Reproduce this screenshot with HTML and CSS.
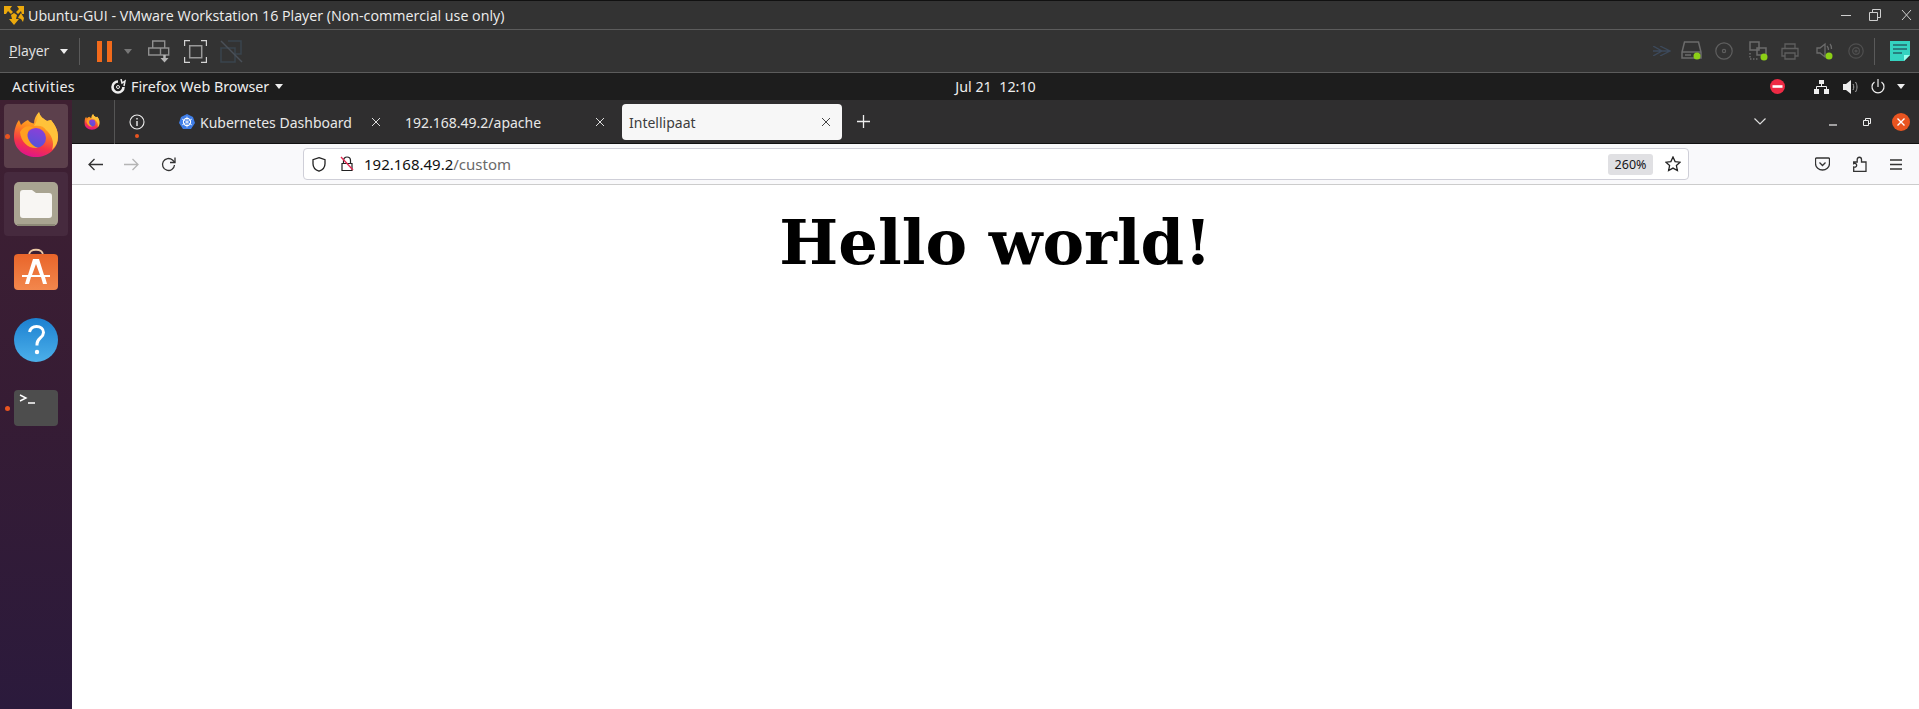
FILE: index.html
```html
<!DOCTYPE html>
<html lang="en">
<head>
<meta charset="utf-8">
<title>Ubuntu-GUI - VMware Workstation 16 Player</title>
<link rel="stylesheet" href="styles.css">
</head>
<body>
<header class="vm-title">
  <svg class="vm-logo" width="20" height="19" viewBox="0 0 20 19"><path fill="#eba90d" d="M0 0h8L6 3l3 3-1 1-1 1-3-3-2 3H0zM20 0v8h-2l-1-3-3 3-2-2 3-3-2-3zM7 9l3-2 3 2-1 4h3l-5 6-5-6h3zM17 7l3 5-1 4-2-3-3-1 1-2z"/></svg>
  <span class="vm-title-text">Ubuntu-GUI - VMware Workstation 16 Player (Non-commercial use only)</span>
  <span class="spacer"></span>
  <svg class="wc wc-min" width="10" height="12" viewBox="0 0 10 12"><path d="M0 6.500h10" stroke="#cfcfcf" fill="none"/></svg>
  <svg class="wc wc-max" width="12" height="12" viewBox="0 0 12 12"><path d="M.5 3.500h8v8h-8zM3.500 3.500v-3h8v8h-3" stroke="#cfcfcf" fill="none"/></svg>
  <svg class="wc wc-close" width="11" height="12" viewBox="0 0 11 12"><path d="M1 1l9 10M10 1L1 11" stroke="#cfcfcf" fill="none"/></svg>
</header>

<section class="vm-toolbar">
  <span class="player-menu"><u>P</u>layer</span>
  <i class="caret caret-light caret-player"></i>
  <i class="vrule vrule-left"></i>
  <svg class="pause" width="16" height="21" viewBox="0 0 16 21"><path fill="#f26a1b" d="M0 0h5v21H0zM10 0h5v21h-5z"/></svg>
  <i class="caret caret-dim caret-pause"></i>
  <svg class="tb-send" width="22" height="23" viewBox="0 0 22 23" fill="none" stroke="#8f8f8f" stroke-width="1.400"><path d="M4.700 1h12v7h-12zM.7 8h20v7H.7zM12.500 8v7"/><path d="M16.500 15v4" stroke="#b5b5b5" stroke-width="2.500"/><path d="M12.500 18h8l-4 4.500z" fill="#b5b5b5" stroke="none"/></svg>
  <svg class="tb-full" width="23" height="23" viewBox="0 0 23 23" fill="none" stroke="#d4d4d4" stroke-width="1.200"><path d="M.6 6V.6H6M17 .6h5.400V6M22.400 17v5.400H17M6 22.400H.6V17"/><path d="M5.700 5.700h12v12h-12z" stroke="#999" stroke-width="1.500"/></svg>
  <svg class="tb-unity" width="23" height="23" viewBox="0 0 23 23" fill="none" stroke="#3a444d" stroke-width="1.500"><path d="M8 1h13v13h-6M1 8h14v14H1z"/><path d="M1 1l21 21" stroke="#4a5058"/></svg>
  <span class="spacer"></span>
  <svg class="st st-arrows" width="18" height="10" viewBox="0 0 18 10" fill="none" stroke="#3d4a5c" stroke-width="1.300"><path d="M0 0l9 5-9 5M7 0l10 5-10 5M0 5h16"/></svg>
  <svg class="st st-disk" width="21" height="20" viewBox="0 0 21 20" fill="none" stroke="#6c6c6c" stroke-width="1.500"><path d="M3.500 1h14l2.500 10v6H1v-6zM1 11h19M4 14h6"/><circle cx="16" cy="15" r="3.500" fill="#8ccf16" stroke="none"/></svg>
  <svg class="st st-cd" width="18" height="18" viewBox="0 0 18 18" fill="none" stroke="#5f5f5f" stroke-width="1.200"><circle cx="9" cy="9" r="8.200"/><circle cx="9" cy="9" r="1.600"/></svg>
  <svg class="st st-net" width="19" height="20" viewBox="0 0 19 20" fill="none" stroke="#6c6c6c" stroke-width="1.500"><path d="M1 1h9v8H1zM8 7h9v7H8z"/><path d="M1 12v6h9" stroke-dasharray="1.500 1.500"/><circle cx="15" cy="16" r="3.500" fill="#8ccf16" stroke="none"/></svg>
  <svg class="st st-print" width="18" height="17" viewBox="0 0 18 17" fill="none" stroke="#5f5f5f" stroke-width="1.300"><path d="M4 5V1h10v4M4 13H1V5.500h16V13h-3M4 10h10v6H4z"/></svg>
  <svg class="st st-sound" width="17" height="18" viewBox="0 0 17 18" fill="none" stroke="#6c6c6c" stroke-width="1.300"><path d="M1 6h3l5-4v13l-5-4H1zM11 4c1 1 1.500 2 1.500 4M14 2c1 1 1.500 2.500 1.500 5"/><circle cx="13" cy="14" r="3.500" fill="#8ccf16" stroke="none"/></svg>
  <svg class="st st-cam" width="16" height="17" viewBox="0 0 16 17" fill="none" stroke="#4f4f4f" stroke-width="1.200"><circle cx="8" cy="8" r="7.200"/><circle cx="8" cy="8" r="3.400"/><circle cx="8" cy="8" r="1" fill="#4f4f4f"/></svg>
  <i class="vrule vrule-right"></i>
  <svg class="st-note" width="20" height="20" viewBox="0 0 20 20"><path fill="#35d3c0" d="M0 0h20v14l-6 6H0z"/><path d="M3 4h14M3 8h14M3 12h9" stroke="#25666a" stroke-width="1.500"/><path fill="#9fe" d="M14 20v-6h6z"/></svg>
</section>

<section class="gnome-bar">
  <span class="activities">Activities</span>
  <svg class="app-glyph" width="16" height="16" viewBox="0 0 16 16" fill="none" stroke="#eee" stroke-width="2.600"><path d="M8 2.500A5.500 5.500 0 1 0 13.500 8"/><path d="M11 0l1 4 3-2-1 5" stroke-width="1.500"/><circle cx="8" cy="8" r="1.500" stroke-width="1"/></svg>
  <span class="app-name">Firefox Web Browser</span>
  <i class="caret caret-light caret-app"></i>
  <span class="clock">Jul 21&nbsp;&nbsp;12:10</span>
  <span class="spacer"></span>
  <svg class="dnd" width="15" height="15" viewBox="0 0 15 15"><circle cx="7.500" cy="7.500" r="7.500" fill="#ee2a44"/><path d="M2.500 6.200h10v2.600h-10z" fill="#fff"/></svg>
  <svg class="sys-net" width="15" height="14" viewBox="0 0 15 14"><path fill="#eee" d="M5 0h5v4H5zM0 9h5v5H0zM10 9h5v5h-5z"/><path d="M7.500 4v3M2.500 9V6.500h10V9" fill="none" stroke="#eee"/></svg>
  <svg class="sys-vol" width="15" height="14" viewBox="0 0 15 14"><path fill="#eee" d="M0 4h3l5-4v14l-5-4H0z"/><path d="M10 4c1 2 1 4 0 6M12.500 2c2 3 2 7 0 10" fill="none" stroke="#aaa"/></svg>
  <svg class="sys-pow" width="14" height="15" viewBox="0 0 14 15" fill="none" stroke="#eee" stroke-width="1.200"><path d="M7 0v8M3.500 3a6 6 0 1 0 7 0"/></svg>
  <i class="caret caret-light caret-sys"></i>
</section>

<div class="desktop">
  <nav class="dock">
    <span class="tile tile-active">
      <i class="run-dot"></i>
      <svg class="ff-big" width="44" height="46" viewBox="0 0 44 46">
        <defs>
          <linearGradient id="ffo" x1="0.700" y1="0" x2="0.400" y2="1"><stop offset="0" stop-color="#ffd040"/><stop offset=".4" stop-color="#ff8c1e"/><stop offset=".75" stop-color="#f4334a"/><stop offset="1" stop-color="#e0148a"/></linearGradient>
          <linearGradient id="ffp" x1="0.600" y1="0" x2="0.300" y2="1"><stop offset="0" stop-color="#8c3fd8"/><stop offset="1" stop-color="#4f55d8"/></linearGradient>
          <symbol id="ff" viewBox="0 0 44 46">
            <path fill="url(#ffo)" d="M25 0C26 5 30 7 33 9L37 8C41 13 44 18 44 25C44 37 34 45 22 45C10 45 0 37 0 25C0 18 2 12 5 8L7 13C9 11 11 9 14 8C15 10 17 11 20 11.500C20 7 22 3 25 0Z"/>
            <circle cx="22" cy="26" r="10" fill="url(#ffp)"/>
            <path fill="#ffc23a" d="M25 0C26 5 30 7 33 9L37 8C41 13 44 18 44 25C44 30 42 34 38 38C41 30 37 22 32 18C30 14 25 13 20 14C23 9 24 5 25 0Z"/>
            <path fill="#ff9f22" d="M6 20C9 14 15 13 20 16C16 16.500 14 18 14 20.500C12 25 16 33 24 36C14 37 7 30 6 20Z"/>
          </symbol>
        </defs>
        <use href="#ff"/>
      </svg>
    </span>
    <span class="tile tile-open">
      <svg width="44" height="44" viewBox="0 0 44 44"><rect width="44" height="44" rx="5" fill="#a9a491"/><rect x="3" y="42" width="38" height="2" fill="#8d8977"/><path fill="#f8f6f3" d="M6 11a3 3 0 0 1 3-3h9l4 3h13a3 3 0 0 1 3 3v19a3 3 0 0 1-3 3H9a3 3 0 0 1-3-3z"/></svg>
    </span>
    <span class="tile">
      <svg class="store-icon" width="44" height="42" viewBox="0 0 44 42"><defs><linearGradient id="st" x1="0" y1="0" x2="0" y2="1"><stop offset="0" stop-color="#e9652a"/><stop offset="1" stop-color="#f2874d"/></linearGradient></defs><path d="M15 7C15 0 29 0 29 7" fill="none" stroke="#ecc8a4" stroke-width="2"/><rect y="6" width="44" height="36" rx="4" fill="url(#st)"/><path fill="#fff" d="M19 11h6l5 16h6v2h-5l2 7h-4l-2-7H17l-2 7h-4l2-7H8v-2h6zM22 16l-4 11h8z"/></svg>
    </span>
    <span class="tile">
      <svg width="44" height="44" viewBox="0 0 44 44"><defs><linearGradient id="hb" x1="0" y1="0" x2="0" y2="1"><stop offset="0" stop-color="#1c80d0"/><stop offset="1" stop-color="#4cb0ea"/></linearGradient></defs><circle cx="22" cy="22" r="22" fill="url(#hb)"/><path d="M15.500 14c1-4 4-5.500 7-5.500 4 0 7 2.500 7 6 0 5.500-6.500 5.500-6.500 11.500v1.500" fill="none" stroke="#fff" stroke-width="3"/><circle cx="23" cy="34" r="2.200" fill="#fff"/></svg>
    </span>
    <span class="tile">
      <i class="run-dot"></i>
      <svg width="44" height="36" viewBox="0 0 44 36"><rect width="44" height="36" rx="4" fill="#4d4d4d"/><path d="M6 5l6 3-6 3M14 13h7" fill="none" stroke="#fff" stroke-width="1.400"/></svg>
    </span>
  </nav>

  <div class="browser">
    <div class="tabbar">
      <svg class="tb-ff" width="16" height="16" viewBox="0 0 44 46"><use href="#ff"/></svg>
      <i class="tab-rule"></i>
      <span class="info">
        <svg width="16" height="16" viewBox="0 0 16 16" fill="none" stroke="#eee" stroke-width="1.100"><circle cx="8" cy="8" r="7"/><path d="M8 7v5M8 4v1.500" stroke-width="1.400"/></svg>
        <i class="info-dot"></i>
      </span>
      <div class="tab tab-k8s">
        <svg class="favicon" width="16" height="16" viewBox="0 0 16 16"><path fill="#3f7ee8" d="M8 0l6 3 2 6-4 6H4L0 9l2-6z"/><circle cx="8" cy="8" r="3.600" fill="none" stroke="#fff" stroke-width="1.100"/><path d="M8 2.500v11M3 5l10 6M13 5L3 11" stroke="#fff" stroke-width=".7"/></svg>
        <span class="tab-label">Kubernetes Dashboard</span>
        <svg class="tab-x" width="10" height="10" viewBox="0 0 10 10"><path d="M1 1l8 8M9 1L1 9" stroke="#ddd" fill="none"/></svg>
      </div>
      <div class="tab tab-apache">
        <span class="tab-label">192.168.49.2/apache</span>
        <svg class="tab-x" width="10" height="10" viewBox="0 0 10 10"><path d="M1 1l8 8M9 1L1 9" stroke="#ddd" fill="none"/></svg>
      </div>
      <div class="tab tab-active">
        <span class="tab-label">Intellipaat</span>
        <svg class="tab-x" width="10" height="10" viewBox="0 0 10 10"><path d="M1 1l8 8M9 1L1 9" stroke="#444" fill="none"/></svg>
      </div>
      <svg class="tab-plus" width="13" height="13" viewBox="0 0 13 13"><path d="M6.500 0v13M0 6.500h13" stroke="#eee" stroke-width="1.300" fill="none"/></svg>
      <span class="spacer"></span>
      <svg class="tab-list" width="12" height="7" viewBox="0 0 12 7"><path d="M.5.500L6 6l5.500-5.500" stroke="#ddd" stroke-width="1.200" fill="none"/></svg>
      <svg class="b-min" width="8" height="8" viewBox="0 0 8 8"><path d="M0 7h8" stroke="#eee" stroke-width="1.200"/></svg>
      <svg class="b-max" width="8" height="8" viewBox="0 0 8 8" fill="none" stroke="#eee"><path d="M.5 2.500h5v5h-5zM2.500 2V.5h5v5H6"/></svg>
      <svg class="b-close" width="18" height="18" viewBox="0 0 18 18"><circle cx="9" cy="9" r="9" fill="#e95420"/><path d="M5.500 5.500l7 7M12.500 5.500l-7 7" stroke="#fff" stroke-width="1.400"/></svg>
    </div>

    <div class="navbar">
      <svg class="nav-back" width="15" height="13" viewBox="0 0 15 13" fill="none" stroke="#333" stroke-width="1.300"><path d="M15 6.500H1M6.500 1L1 6.500 6.500 12"/></svg>
      <svg class="nav-fwd" width="15" height="13" viewBox="0 0 15 13" fill="none" stroke="#b5b5b5" stroke-width="1.300"><path d="M0 6.500h14M8.500 1L14 6.500 8.500 12"/></svg>
      <svg class="nav-reload" width="15" height="15" viewBox="0 0 15 15" fill="none" stroke="#333" stroke-width="1.300"><path d="M13.500 8A6 6 0 1 1 11.500 3L14 5.500"/><path d="M14 .5v5H9"/></svg>
      <div class="urlbar">
        <svg class="shield" width="14" height="15" viewBox="0 0 14 15" fill="none" stroke="#222" stroke-width="1.300"><path d="M7 .7l6 2v4c0 4-3 6.500-6 7.500-3-1-6-3.500-6-7.500v-4z"/></svg>
        <svg class="lock" width="14" height="16" viewBox="0 0 14 16" fill="none" stroke="#222" stroke-width="1.200"><path d="M3.500 8V4.500a3.500 3.500 0 0 1 7 0V8M2 7.500h10v7H2z"/><path d="M1 1l12 13" stroke="#e22850" stroke-width="1.300"/></svg>
        <span class="url"><span class="url-host">192.168.49.2</span>/custom</span>
        <span class="spacer"></span>
        <span class="zoom-pill">260%</span>
        <svg class="star" width="16" height="16" viewBox="0 0 16 16" fill="none" stroke="#222" stroke-width="1.300"><path d="M8 1l2.100 4.600 5 .6-3.700 3.400 1 5L8 12.100l-4.400 2.500 1-5L.9 6.200l5-.6z"/></svg>
      </div>
      <svg class="nav-pocket" width="15" height="14" viewBox="0 0 15 14" fill="none" stroke="#333" stroke-width="1.300"><path d="M1.500 1h12a1 1 0 0 1 1 1v4.500c0 4-3.500 6.500-7 6.500s-7-2.500-7-6.500V2a1 1 0 0 1 1-1z"/><path d="M4.500 5.500l3 3 3-3"/></svg>
      <svg class="nav-ext" width="14" height="16" viewBox="0 0 14 16" fill="none" stroke="#333" stroke-width="1.300"><path d="M.7 15.300V11c1.500.5 3-.2 3-1.700S2.200 7 .7 7.700V6h3.500V3.500C4.200.5 8.500.5 8.500 3.500V6h4.500v9.300z"/></svg>
      <svg class="nav-menu" width="12" height="11" viewBox="0 0 12 11" fill="none" stroke="#333" stroke-width="1.300"><path d="M0 1h12M0 5.500h12M0 10h12"/></svg>
    </div>

    <main class="page">
      <h1 class="hello">Hello world!</h1>
    </main>
  </div>
</div>
</body>
</html>
```
FILE: styles.css
```css
* { box-sizing: border-box; }
html, body { margin: 0; height: 100%; overflow: hidden; }
body {
  display: flex;
  flex-direction: column;
  font-family: "Noto Sans", "Open Sans", sans-serif;
  background: #fff;
}
svg { display: block; flex: none; }
i { display: block; flex: none; }
.spacer { flex: 1; }

/* VMware title bar */
.vm-title {
  height: 29px;
  background: #333;
  border-top: 1px solid #111;
  color: #eee;
  display: flex;
  align-items: center;
  font-family: "Open Sans", sans-serif;
  font-size: 14.25px;
}
.vm-logo { margin-left: 4px; }
.vm-title-text { margin-left: 4px; white-space: nowrap; }
.wc-min { margin-right: 18px; }
.wc-max { margin-right: 20px; }
.wc-close { margin-right: 7px; }

/* VMware toolbar */
.vm-toolbar {
  height: 44px;
  background: #333;
  border-top: 1px solid #5c5c5c;
  border-bottom: 1px solid #5c5c5c;
  display: flex;
  align-items: center;
  color: #e4e4e4;
  font-family: "Open Sans", sans-serif;
  font-size: 14px;
}
.player-menu { margin-left: 9px; margin-bottom: 2px; width: 41px; }
.caret { width: 0; height: 0; border-left: 4.5px solid transparent; border-right: 4.5px solid transparent; border-top: 5px solid #eee; }
.caret-dim { border-top-color: #777; }
.caret-player { margin-left: 10px; }
.vrule { width: 1px; height: 27px; background: #5a5a5a; }
.vrule-left { margin-left: 11px; }
.pause { margin-left: 17px; }
.caret-pause { margin-left: 11px; }
.tb-send { margin-left: 16px; }
.tb-full { margin-left: 14px; }
.tb-unity { margin-left: 13px; }
.st-disk { margin-left: 10px; }
.st-cd { margin-left: 13px; }
.st-net { margin-left: 16px; }
.st-print { margin-left: 13px; }
.st-sound { margin-left: 17px; }
.st-cam { margin-left: 15px; }
.vrule-right { margin-left: 10px; }
.st-note { margin-left: 15px; margin-right: 9px; }

/* GNOME top bar */
.gnome-bar {
  height: 27px;
  background: #1d1d1d;
  color: #eee;
  display: flex;
  align-items: center;
  font-size: 14.3px;
}
.activities { margin-left: 12px; width: 98px; letter-spacing: .35px; }
.app-name { margin-left: 5px; white-space: nowrap; }
.caret-app { margin-left: 6px; }
.clock { margin-left: 672px; margin-bottom: 1px; white-space: pre; }
.dnd { margin-left: 0; }
.sys-net { margin-left: 29px; }
.sys-vol { margin-left: 14px; }
.sys-pow { margin-left: 13px; }
.caret-sys { margin-left: 12px; margin-right: 14px; }

/* Lower area */
.desktop { flex: 1; display: flex; min-height: 0; }
.dock {
  width: 72px;
  flex: none;
  padding: 4px 4px 0;
  display: flex;
  flex-direction: column;
  gap: 4px;
  background: linear-gradient(180deg, #3f2032 0%, #361c34 50%, #2b1a3c 100%);
}
.tile {
  height: 64px;
  border-radius: 4px;
  display: flex;
  align-items: center;
  justify-content: center;
  position: relative;
}
.tile-active { background: #5c404c; }
.tile-open { background: #462a3e; }
.ff-big { margin-bottom: 2px; }
.store-icon { margin-bottom: 6px; }
.run-dot {
  position: absolute;
  left: 1px;
  top: 30px;
  width: 5px;
  height: 5px;
  border-radius: 50%;
  background: #e95420;
}
.browser { flex: 1; min-width: 0; display: flex; flex-direction: column; }

/* Tabs */
.tabbar {
  height: 44px;
  background: #2f2e2f;
  border-bottom: 1px solid #111;
  display: flex;
  align-items: center;
  color: #e8e8e8;
  font-size: 14px;
}
.tb-ff { margin-left: 12px; }
.tab-rule { width: 1px; height: 44px; background: #555; margin-left: 14px; }
.info { margin-left: 14px; position: relative; }
.info-dot { position: absolute; left: 6px; top: 20px; width: 4px; height: 4px; border-radius: 50%; background: #e95420; }
.tab { display: flex; align-items: center; height: 36px; flex: none; }
.tab-label { white-space: nowrap; padding-top: 2px; }
.tab-k8s { margin-left: 18px; width: 218px; padding: 0 0 0 16px; }
.favicon { margin-right: 5px; }
.tab-k8s .tab-x { margin-left: auto; margin-right: 0; }
.tab-apache { margin-left: 24px; width: 207px; }
.tab-apache .tab-x { margin-left: auto; }
.tab-x { margin-right: 7px; }
.tab-active {
  width: 220px;
  margin-left: 10px;
  padding: 0 0 0 7px;
  background: #f7f7f7;
  color: #3d3d3d;
  border-radius: 4px;
}
.tab-active .tab-x { margin-left: auto; margin-right: 11px; }
.tab-plus { margin-left: 15px; }
.tab-list { margin-right: 63px; }
.b-min { margin-right: 26px; }
.b-max { margin-right: 21px; }
.b-close { margin-right: 9px; }

/* Nav */
.navbar {
  height: 41px;
  background: #f9f9fb;
  border-bottom: 1px solid #ccc;
  display: flex;
  align-items: center;
}
.nav-back { margin-left: 16px; }
.nav-fwd { margin-left: 21px; }
.nav-reload { margin-left: 22px; }
.urlbar {
  width: 1386px;
  height: 32px;
  margin-left: 127px;
  background: #fff;
  border: 1px solid #cfcfd8;
  border-radius: 4px;
  display: flex;
  align-items: center;
  font-size: 15px;
  padding: 0 7px 0 8px;
  flex: none;
}
.lock { margin-left: 14px; }
.url { margin-left: 10px; color: #6a6a6a; }
.url-host { color: #111; }
.zoom-pill {
  width: 45px;
  height: 21px;
  background: #e0e0e3;
  border-radius: 3px;
  font-size: 12.5px;
  color: #15141a;
  display: flex;
  align-items: center;
  justify-content: center;
}
.star { margin-left: 12px; }
.nav-pocket { margin-left: 126px; }
.nav-ext { margin-left: 23px; }
.nav-menu { margin-left: 23px; }

/* Page */
.page { flex: 1; background: #fff; }
.hello {
  margin: 12px 0 0;
  text-align: center;
  font-family: "DejaVu Serif", serif;
  font-weight: 700;
  font-size: 62.4px;
  line-height: 91px;
  color: #000;
}
```
